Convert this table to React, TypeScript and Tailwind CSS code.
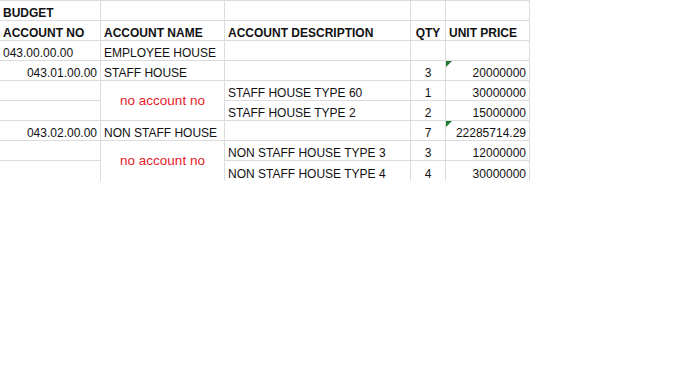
import React from 'react';

type Cell = {
  text?: string;
  bold?: boolean;
  align?: 'left' | 'right' | 'center';
  red?: boolean;
  span?: boolean;
  flag?: boolean;
  skip?: boolean;
};

const rows: Cell[][] = [
  [{ text: 'BUDGET', bold: true }, {}, {}, {}, {}],
  [
    { text: 'ACCOUNT NO', bold: true },
    { text: 'ACCOUNT NAME', bold: true },
    { text: 'ACCOUNT DESCRIPTION', bold: true },
    { text: 'QTY', bold: true, align: 'center' },
    { text: 'UNIT PRICE', bold: true },
  ],
  [{ text: '043.00.00.00' }, { text: 'EMPLOYEE HOUSE' }, {}, {}, {}],
  [
    { text: '043.01.00.00', align: 'right' },
    { text: 'STAFF HOUSE' },
    {},
    { text: '3', align: 'center' },
    { text: '20000000', align: 'right', flag: true },
  ],
  [
    {},
    { text: 'no account no', red: true, span: true },
    { text: 'STAFF HOUSE TYPE 60' },
    { text: '1', align: 'center' },
    { text: '30000000', align: 'right' },
  ],
  [
    {},
    { skip: true },
    { text: 'STAFF HOUSE TYPE 2' },
    { text: '2', align: 'center' },
    { text: '15000000', align: 'right' },
  ],
  [
    { text: '043.02.00.00', align: 'right' },
    { text: 'NON STAFF HOUSE' },
    {},
    { text: '7', align: 'center' },
    { text: '22285714.29', align: 'right', flag: true },
  ],
  [
    {},
    { text: 'no account no', red: true, span: true },
    { text: 'NON STAFF HOUSE TYPE 3' },
    { text: '3', align: 'center' },
    { text: '12000000', align: 'right' },
  ],
  [
    {},
    { skip: true },
    { text: 'NON STAFF HOUSE TYPE 4' },
    { text: '4', align: 'center' },
    { text: '30000000', align: 'right' },
  ],
];

export default function App() {
  return (
    <div className="w-[683px] h-[384px] bg-white overflow-hidden" style={{ fontFamily: '"Liberation Sans", Arial, sans-serif' }}>
      <div className="grid grid-cols-[101px_124px_186px_35px_84px] auto-rows-[20px] w-fit border-t border-[#dadcdd] text-[12px] leading-[14px] text-[#111]">
        {rows.map((row, r) =>
          row.map((c, i) => {
            if (c.skip) return null;
            const last = r === rows.length - 1 || (c.span && r === rows.length - 2);
            const justify =
              c.red || c.align === 'center'
                ? 'justify-center'
                : c.align === 'right'
                ? 'justify-end'
                : 'justify-start';
            return (
              <div
                key={`${r}-${i}`}
                className={`relative flex px-[3px] border-r border-[#dadcdd] ${last ? '' : 'border-b'} ${justify} ${
                  c.span ? 'row-span-2 items-center text-[13.5px]' : 'items-end'
                } ${c.bold ? 'font-bold' : ''} ${c.red ? 'text-[#e8202a]' : ''}`}
              >
                {c.flag && (
                  <span className="absolute left-0 top-0 w-0 h-0 border-t-[6px] border-r-[6px] border-t-[#1f7a2b] border-r-transparent" />
                )}
                <span className="whitespace-nowrap">{c.text}</span>
              </div>
            );
          })
        )}
      </div>
    </div>
  );
}
